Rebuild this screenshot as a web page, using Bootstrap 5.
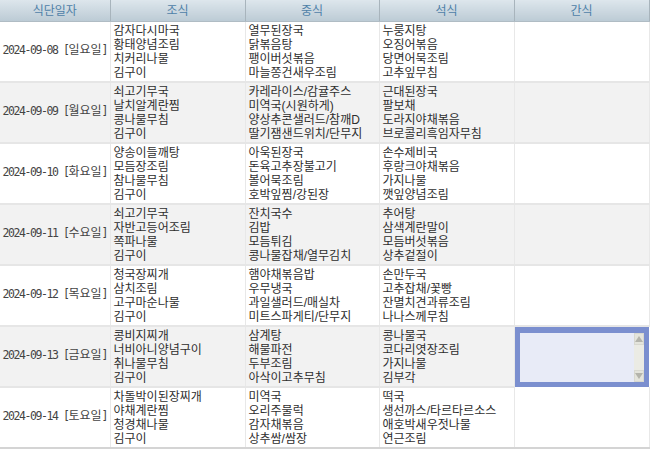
<!DOCTYPE html>
<html lang="ko">
<head>
<meta charset="utf-8">
<title>식단표</title>
<link href="https://cdn.jsdelivr.net/npm/bootstrap@5.3.0/dist/css/bootstrap.min.css" rel="stylesheet">
<style>
html,body{height:451px;overflow:hidden;background:#fff}
body{font-family:"Liberation Sans","Noto Sans CJK KR",sans-serif;font-size:12px;color:#333}
.meal-table{table-layout:fixed;width:649px;margin:0;border-collapse:collapse;font-size:12px;--bs-table-color:#333;--bs-table-bg:transparent}
.meal-table col.c-date{width:110px}
.meal-table col.c-a{width:135px}
.meal-table col.c-b{width:134px}
.meal-table col.c-c{width:135px}
.meal-table col.c-d{width:135px}
.meal-table th{height:21px;padding:2px 0 0;text-align:center;vertical-align:middle;font-weight:400;font-family:"Liberation Sans","Noto Sans CJK KR",sans-serif;font-size:12px;line-height:18px;color:#4f81a8;background:linear-gradient(#dde6ec,#bccbd5);border:0;border-right:1px solid #a8b4bc;border-bottom:1px solid #b0bcc4}
.meal-table td{height:61px;padding:3px 0 0 2px;vertical-align:middle;border:0;border-right:1px solid #e8e8e8;border-bottom:2px solid #e6e6e6;line-height:13.85px;font-family:"Liberation Sans","Noto Sans CJK KR",sans-serif;color:#2e2e2e;box-sizing:border-box}
.meal-table td.dt{padding:0 0 1px 0;text-align:center;white-space:nowrap;font-family:"DejaVu Sans Mono","Noto Sans CJK KR",monospace;font-size:11.5px;letter-spacing:-1.42px;color:#444}
.day-name{font-family:"Liberation Sans","Noto Sans CJK KR",sans-serif;font-size:12px;letter-spacing:0}
.meal-table td.menu-cell{padding-left:3px}
.meal-table tr.alt td{background:#f2f2f2}
.meal-table tr:last-child td{border-bottom:2px solid #d4d4d4}
.meal-table td.edit-cell{padding:0;background:#7b8fcf!important;border:0}
.edit-box{height:59px;margin:0;border:5px solid #7b8fcf;background:#e8ebf7}
.edit-input{flex:1 1 auto;min-width:0;border:0;outline:0;padding:0;background:transparent;resize:none}
.fake-bar{width:12px;background:#ebebe4}
.bar-btn{height:12px;background:#e4e4dc;border:1px solid #d8d8d0;color:#b4b4ac}
.bar-btn svg{display:block;width:8px;height:6px}
</style>
</head>
<body>
<table class="table meal-table">
<colgroup><col class="c-date"><col class="c-a"><col class="c-b"><col class="c-c"><col class="c-d"></colgroup>
<thead><tr><th>식단일자</th><th>조식</th><th>중식</th><th>석식</th><th>간식</th></tr></thead>
<tbody>
<tr><td class="dt">2024-09-08 [<span class="day-name">일요일</span>]</td><td class="menu-cell">감자다시마국<br>황태양념조림<br>치커리나물<br>김구이</td><td class="menu-cell">열무된장국<br>닭볶음탕<br>팽이버섯볶음<br>마늘쫑건새우조림</td><td class="menu-cell">누룽지탕<br>오징어볶음<br>당면어묵조림<br>고추잎무침</td><td></td></tr>
<tr class="alt"><td class="dt">2024-09-09 [<span class="day-name">월요일</span>]</td><td class="menu-cell">쇠고기무국<br>날치알계란찜<br>콩나물무침<br>김구이</td><td class="menu-cell">카레라이스/감귤주스<br>미역국(시원하게)<br>양상추콘샐러드/참깨D<br>딸기잼샌드위치/단무지</td><td class="menu-cell">근대된장국<br>팔보채<br>도라지야채볶음<br>브로콜리흑임자무침</td><td></td></tr>
<tr><td class="dt">2024-09-10 [<span class="day-name">화요일</span>]</td><td class="menu-cell">양송이들깨탕<br>모듬장조림<br>참나물무침<br>김구이</td><td class="menu-cell">아욱된장국<br>돈육고추장불고기<br>볼어묵조림<br>호박잎찜/강된장</td><td class="menu-cell">손수제비국<br>후랑크야채볶음<br>가지나물<br>깻잎양념조림</td><td></td></tr>
<tr class="alt"><td class="dt">2024-09-11 [<span class="day-name">수요일</span>]</td><td class="menu-cell">쇠고기무국<br>자반고등어조림<br>쪽파나물<br>김구이</td><td class="menu-cell">잔치국수<br>김밥<br>모듬튀김<br>콩나물잡채/열무김치</td><td class="menu-cell">추어탕<br>삼색계란말이<br>모듬버섯볶음<br>상추겉절이</td><td></td></tr>
<tr><td class="dt">2024-09-12 [<span class="day-name">목요일</span>]</td><td class="menu-cell">청국장찌개<br>삼치조림<br>고구마순나물<br>김구이</td><td class="menu-cell">햄야채볶음밥<br>우무냉국<br>과일샐러드/매실차<br>미트스파게티/단무지</td><td class="menu-cell">손만두국<br>고추잡채/꽃빵<br>잔멸치견과류조림<br>나나스께무침</td><td></td></tr>
<tr class="alt"><td class="dt">2024-09-13 [<span class="day-name">금요일</span>]</td><td class="menu-cell">콩비지찌개<br>너비아니양념구이<br>취나물무침<br>김구이</td><td class="menu-cell">삼계탕<br>해물파전<br>두부조림<br>아삭이고추무침</td><td class="menu-cell">콩나물국<br>코다리엿장조림<br>가지나물<br>김부각</td>
<td class="edit-cell"><div class="edit-box d-flex"><textarea class="edit-input" aria-label="간식"></textarea><div class="fake-bar d-flex flex-column justify-content-between"><div class="bar-btn d-flex align-items-center justify-content-center"><svg viewBox="0 0 8 6"><path d="M4 0 8 6H0z" fill="currentColor"/></svg></div><div class="bar-btn d-flex align-items-center justify-content-center"><svg viewBox="0 0 8 6"><path d="M0 0H8L4 6z" fill="currentColor"/></svg></div></div></div></td></tr>
<tr><td class="dt">2024-09-14 [<span class="day-name">토요일</span>]</td><td class="menu-cell">차돌박이된장찌개<br>야채계란찜<br>청경채나물<br>김구이</td><td class="menu-cell">미역국<br>오리주물럭<br>감자채볶음<br>상추쌈/쌈장</td><td class="menu-cell">떡국<br>생선까스/타르타르소스<br>애호박새우젓나물<br>연근조림</td><td></td></tr>
</tbody>
</table>
<script src="https://cdn.jsdelivr.net/npm/bootstrap@5.3.0/dist/js/bootstrap.bundle.min.js"></script>
</body>
</html>
